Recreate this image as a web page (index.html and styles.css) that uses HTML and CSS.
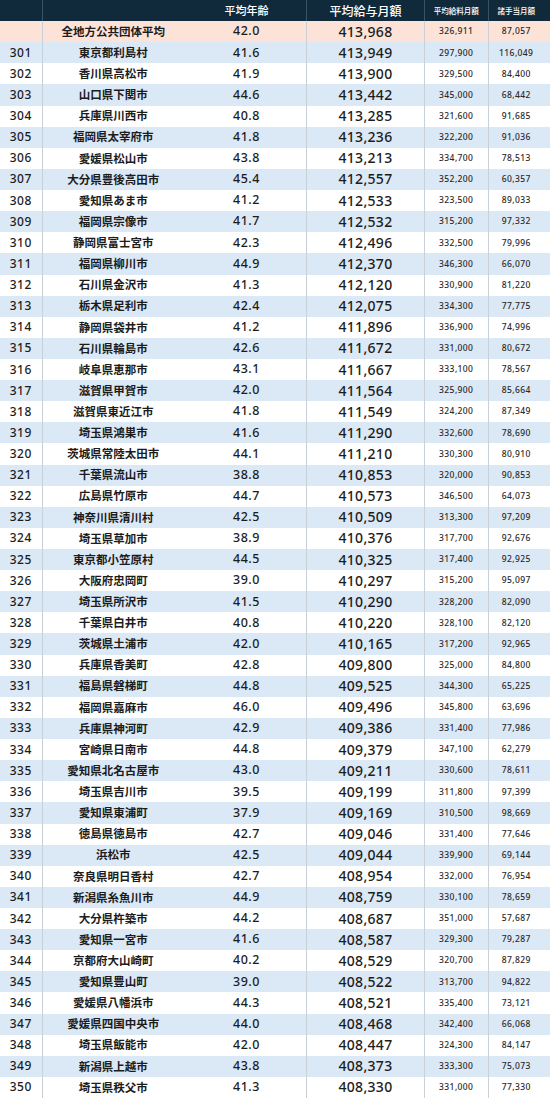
FILE: index.html
```html
<!DOCTYPE html>
<html lang="ja">
<head>
<meta charset="utf-8">
<title>平均給与月額ランキング</title>
<link rel="stylesheet" href="styles.css">
</head>
<body>
<div class="table" id="table">
  <div class="row head">
    <div class="c rank"></div>
    <div class="c name"></div>
    <div class="c age">平均年齢</div>
    <div class="c total">平均給与月額</div>
    <div class="c small">平均給料月額</div>
    <div class="c small last">諸手当月額</div>
  </div>
  <div class="row avg">
    <div class="c rank"></div>
    <div class="c name">全地方公共団体平均</div>
    <div class="c age">42.0</div>
    <div class="c total">413,968</div>
    <div class="c small">326,911</div>
    <div class="c small last">87,057</div>
  </div>
</div>
<script src="app.js"></script>
</body>
</html>
```

FILE: app.js
```js
const data = [
["301","東京都利島村","41.6","413,949","297,900","116,049"],
["302","香川県高松市","41.9","413,900","329,500","84,400"],
["303","山口県下関市","44.6","413,442","345,000","68,442"],
["304","兵庫県川西市","40.8","413,285","321,600","91,685"],
["305","福岡県太宰府市","41.8","413,236","322,200","91,036"],
["306","愛媛県松山市","43.8","413,213","334,700","78,513"],
["307","大分県豊後高田市","45.4","412,557","352,200","60,357"],
["308","愛知県あま市","41.2","412,533","323,500","89,033"],
["309","福岡県宗像市","41.7","412,532","315,200","97,332"],
["310","静岡県富士宮市","42.3","412,496","332,500","79,996"],
["311","福岡県柳川市","44.9","412,370","346,300","66,070"],
["312","石川県金沢市","41.3","412,120","330,900","81,220"],
["313","栃木県足利市","42.4","412,075","334,300","77,775"],
["314","静岡県袋井市","41.2","411,896","336,900","74,996"],
["315","石川県輪島市","42.6","411,672","331,000","80,672"],
["316","岐阜県恵那市","43.1","411,667","333,100","78,567"],
["317","滋賀県甲賀市","42.0","411,564","325,900","85,664"],
["318","滋賀県東近江市","41.8","411,549","324,200","87,349"],
["319","埼玉県鴻巣市","41.6","411,290","332,600","78,690"],
["320","茨城県常陸太田市","44.1","411,210","330,300","80,910"],
["321","千葉県流山市","38.8","410,853","320,000","90,853"],
["322","広島県竹原市","44.7","410,573","346,500","64,073"],
["323","神奈川県清川村","42.5","410,509","313,300","97,209"],
["324","埼玉県草加市","38.9","410,376","317,700","92,676"],
["325","東京都小笠原村","44.5","410,325","317,400","92,925"],
["326","大阪府忠岡町","39.0","410,297","315,200","95,097"],
["327","埼玉県所沢市","41.5","410,290","328,200","82,090"],
["328","千葉県白井市","40.8","410,220","328,100","82,120"],
["329","茨城県土浦市","42.0","410,165","317,200","92,965"],
["330","兵庫県香美町","42.8","409,800","325,000","84,800"],
["331","福島県磐梯町","44.8","409,525","344,300","65,225"],
["332","福岡県嘉麻市","46.0","409,496","345,800","63,696"],
["333","兵庫県神河町","42.9","409,386","331,400","77,986"],
["334","宮崎県日南市","44.8","409,379","347,100","62,279"],
["335","愛知県北名古屋市","43.0","409,211","330,600","78,611"],
["336","埼玉県吉川市","39.5","409,199","311,800","97,399"],
["337","愛知県東浦町","37.9","409,169","310,500","98,669"],
["338","徳島県徳島市","42.7","409,046","331,400","77,646"],
["339","浜松市","42.5","409,044","339,900","69,144"],
["340","奈良県明日香村","42.7","408,954","332,000","76,954"],
["341","新潟県糸魚川市","44.9","408,759","330,100","78,659"],
["342","大分県杵築市","44.2","408,687","351,000","57,687"],
["343","愛知県一宮市","41.6","408,587","329,300","79,287"],
["344","京都府大山崎町","40.2","408,529","320,700","87,829"],
["345","愛知県豊山町","39.0","408,522","313,700","94,822"],
["346","愛媛県八幡浜市","44.3","408,521","335,400","73,121"],
["347","愛媛県四国中央市","44.0","408,468","342,400","66,068"],
["348","埼玉県飯能市","42.0","408,447","324,300","84,147"],
["349","新潟県上越市","43.8","408,373","333,300","75,073"],
["350","埼玉県秩父市","41.3","408,330","331,000","77,330"]
];
const table = document.getElementById("table");
const cls = ["rank","name","age","total","small","small last"];
data.forEach((r, i) => {
  const row = document.createElement("div");
  row.className = "row " + (i % 2 === 0 ? "odd" : "even");
  r.forEach((v, j) => {
    const c = document.createElement("div");
    c.className = "c " + cls[j];
    c.textContent = v;
    row.appendChild(c);
  });
  table.appendChild(row);
});
```

FILE: styles.css
```css
html, body {
  margin: 0;
  padding: 0;
  background: #ffffff;
}
.table {
  width: 550px;
  height: 1098px;
  display: grid;
  grid-template-rows: repeat(52, 1fr);
  font-family: "Noto Sans", "Noto Sans CJK JP", sans-serif;
  color: #1c1c1c;
}
.row {
  display: grid;
  grid-template-columns: 42.5px 141.5px 123px 118px 63.5px 1fr;
  align-items: stretch;
}
.c {
  display: flex;
  align-items: center;
  justify-content: center;
  white-space: nowrap;
  line-height: 1;
}
.rank {
  font-size: 12px;
  font-weight: 500;
  letter-spacing: 0.5px;
  border-right: 1px solid #c9d0d8;
}
.name {
  font-family: "Noto Sans CJK JP", sans-serif;
  font-size: 11.5px;
  font-weight: 700;
}
.age {
  font-size: 12.5px;
  font-weight: 500;
  letter-spacing: 0.5px;
  padding-left: 3px;
  border-right: 1px solid #c9d0d8;
}
.total {
  font-size: 14px;
  font-weight: 500;
  letter-spacing: 0.3px;
  border-right: 1px solid #c9d0d8;
}
.small {
  font-size: 8.5px;
  font-weight: 500;
  letter-spacing: 0.4px;
  color: #2a2a2a;
  border-right: 1px solid #c9d0d8;
}
.small.last {
  border-right: none;
  padding-right: 6px;
}
.head {
  background: #102a3b;
  color: #ffffff;
  font-family: "Noto Sans CJK JP", sans-serif;
}
.head .c {
  border-right-color: #3a5264;
}
.head .age {
  font-size: 11px;
  font-weight: 500;
  letter-spacing: 0;
}
.head .total {
  font-size: 12px;
  font-weight: 500;
  letter-spacing: 0;
}
.head .small {
  font-size: 7.5px;
  font-weight: 500;
  letter-spacing: 0;
  color: #ffffff;
}
.avg {
  background: #fde2d7;
}
.odd {
  background: #dbe8f6;
}
.even {
  background: #ffffff;
}
```
